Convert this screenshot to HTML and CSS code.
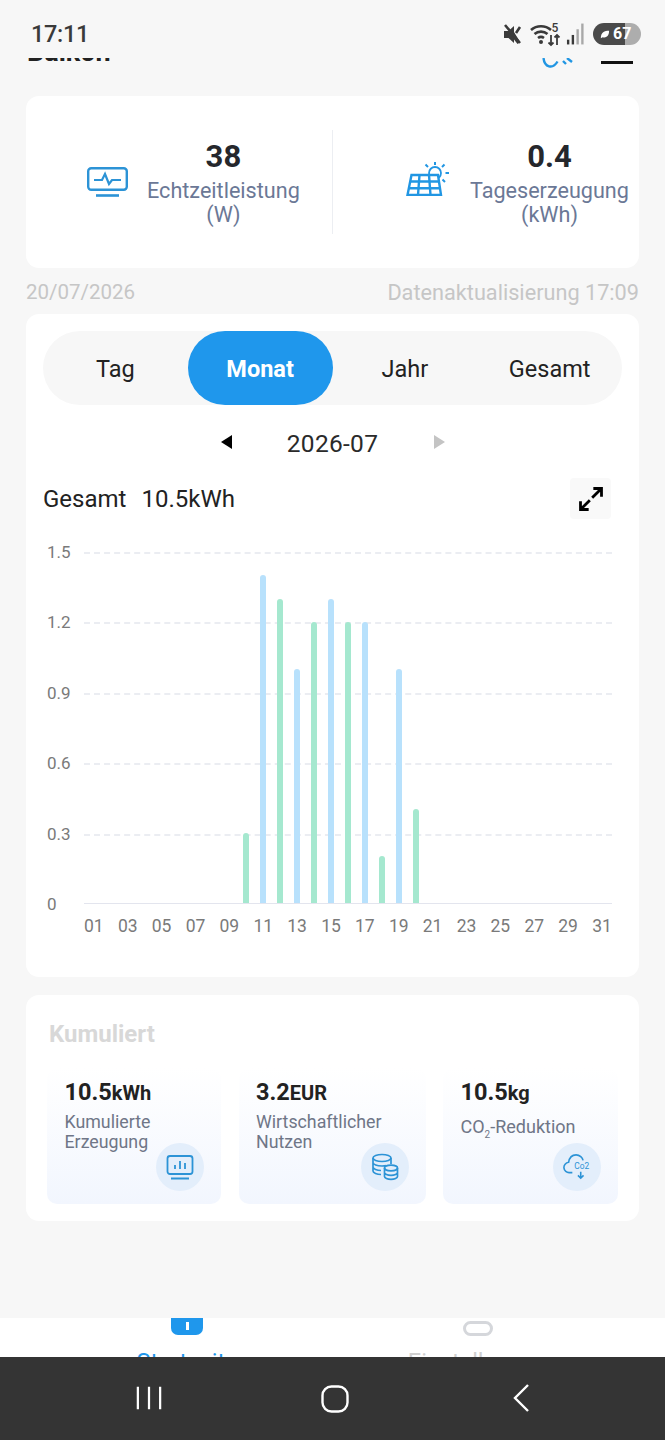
FILE: index.html
```html
<!DOCTYPE html>
<html lang="de">
<head>
<meta charset="utf-8">
<title>Balkon</title>
<link rel="stylesheet" href="styles.css">
</head>
<body>
<div class="screen">
  <div class="status">
    <span class="clock">17:11</span>
    <div class="status-icons">
      <svg class="ic-mute" viewBox="0 0 24 24"><path d="M3 9h4.500l5.500-5v6l6 10-2.500 2-3.500-4.500V21l-5.500-5H3z" fill="#3a3a3a"/><path d="M4 3l15 18M19 5l-4 6" stroke="#3a3a3a" stroke-width="2.600" fill="none"/></svg>
      <svg class="ic-wifi" viewBox="0 0 32 26"><g fill="none" stroke="#3a3a3a" stroke-width="2.600"><path d="M1 9a15 15 0 0 1 20 0"/><path d="M4.500 13a10 10 0 0 1 13 0"/><path d="M8 17a5 5 0 0 1 6 0"/></g><circle cx="11" cy="21" r="2" fill="#3a3a3a"/><path d="M21 14v10m-2.500-2.500L21 24l2.500-2.500M27 24V14m-2.500 2.500L27 14l2.500 2.500" fill="none" stroke="#3a3a3a" stroke-width="1.800"/><text x="21.500" y="10.500" class="ic-wifi-num">5</text></svg>
      <svg class="ic-signal" viewBox="0 0 20 24"><rect x="1" y="18" width="2.500" height="5" fill="#3a3a3a"/><rect x="6" y="13" width="2.500" height="10" fill="#3a3a3a"/><rect x="11" y="7" width="2.500" height="16" fill="#a8a8a8"/><rect x="16" y="1" width="2.500" height="22" fill="#a8a8a8"/></svg>
      <div class="battery">
        <svg class="ic-leaf" viewBox="0 0 12 12"><path d="M2 10C2 4 6 2 11 2c0 5-2 8-7 7z" fill="#fff"/></svg>
        <span class="battery-num">67</span>
      </div>
    </div>
  </div>

  <div class="page-head">
    <span class="page-title">Balkon</span>
    <div class="page-head-icons">
      <svg class="ic-head-arc" viewBox="0 0 32 12"><path d="M1.500 0c1 9 9 12 14 3.500M21 3l3 3M25 0l5 4" fill="none" stroke="#2196e3" stroke-width="2.400"/></svg>
      <span class="menu-line"></span>
    </div>
  </div>

  <section class="card live">
    <div class="live-item live-left">
      <svg class="live-icon-monitor" viewBox="0 0 41 30"><rect x="1.200" y="1.200" width="38.600" height="21.600" rx="3" fill="none" stroke="#2c93d6" stroke-width="2.400"/><path d="M7 13h8l3-6 4 10 3-4h9" fill="none" stroke="#2c93d6" stroke-width="2.200"/><path d="M9 28.500h23" stroke="#2c93d6" stroke-width="2.600"/></svg>
      <div class="live-text">
        <div class="live-value">38</div>
        <div class="live-label">Echtzeitleistung<br>(W)</div>
      </div>
    </div>
    <div class="live-divider"></div>
    <div class="live-item live-right">
      <svg class="live-icon-solar" viewBox="0 0 44 34"><g fill="none" stroke="#2196e3"><circle cx="29" cy="11" r="6" stroke-width="1.800"/><path d="M29 0v3M19.500 2.500l2.500 2.500M38.500 2.500 36 5M43 11h-3.500M39 20l-2.500-2.500" stroke-width="2"/><path d="M5.500 13H32l3 20H1.500z" fill="#fff" stroke-width="2.400"/><path d="M4 19.500h29.500M2.800 26.200h31.500M13.500 13l-1.500 20M23 13l1.500 20" stroke-width="2.400"/></g></svg>
      <div class="live-text">
        <div class="live-value">0.4</div>
        <div class="live-label">Tageserzeugung<br>(kWh)</div>
      </div>
    </div>
  </section>

  <div class="date-row">
    <span>20/07/2026</span>
    <span class="update">Datenaktualisierung 17:09</span>
  </div>

  <section class="card chart-card">
    <div class="tabs">
      <span class="tab">Tag</span>
      <span class="tab tab-active">Monat</span>
      <span class="tab">Jahr</span>
      <span class="tab">Gesamt</span>
    </div>
    <div class="month-row">
      <span class="arrow arrow-left"></span>
      <span class="month">2026-07</span>
      <span class="arrow arrow-right"></span>
    </div>
    <div class="total-row">
      <div class="total"><span>Gesamt</span><span>10.5kWh</span></div>
      <span class="expand">
        <svg viewBox="0 0 24 24"><path d="M14 3h7v7M21 3l-8 8M10 21H3v-7M3 21l8-8" fill="none" stroke="#000" stroke-width="2.400"/></svg>
      </span>
    </div>
    <div class="chart">
      <div class="y-axis">
        <span>1.5</span><span>1.2</span><span>0.9</span><span>0.6</span><span>0.3</span><span>0</span>
      </div>
      <div class="plot-wrap">
        <div class="plot">
          <div class="grid"><i></i><i></i><i></i><i></i><i></i></div>
          <div class="bars">
            <b></b><b></b><b></b><b></b><b></b><b></b><b></b><b></b><b></b>
            <b class="green" style="height:20%"></b>
            <b class="blue" style="height:93.330%"></b>
            <b class="green" style="height:86.670%"></b>
            <b class="blue" style="height:66.670%"></b>
            <b class="green" style="height:80%"></b>
            <b class="blue" style="height:86.670%"></b>
            <b class="green" style="height:80%"></b>
            <b class="blue" style="height:80%"></b>
            <b class="green" style="height:13.330%"></b>
            <b class="blue" style="height:66.670%"></b>
            <b class="green" style="height:26.670%"></b>
            <b></b><b></b><b></b><b></b><b></b><b></b><b></b><b></b><b></b><b></b><b></b>
          </div>
        </div>
        <div class="x-axis">
          <span>01</span><span>03</span><span>05</span><span>07</span><span>09</span><span>11</span><span>13</span><span>15</span><span>17</span><span>19</span><span>21</span><span>23</span><span>25</span><span>27</span><span>29</span><span>31</span>
        </div>
      </div>
    </div>
  </section>

  <section class="card sum-card">
    <h2 class="sum-title">Kumuliert</h2>
    <div class="sum-grid">
      <div class="sum-item sum-a">
        <div class="sum-value">10.5<small>kWh</small></div>
        <div class="sum-label">Kumulierte<br>Erzeugung</div>
        <span class="sum-icon">
          <svg viewBox="0 0 28 28"><rect x="1.500" y="3" width="25" height="18" rx="2.500" fill="none" stroke="#2c93d6" stroke-width="1.800"/><path d="M9 16v-4M14 16V8M19 16v-6M5 25.500h18" stroke="#2c93d6" stroke-width="1.800" fill="none"/></svg>
        </span>
      </div>
      <div class="sum-item sum-b">
        <div class="sum-value">3.2<small>EUR</small></div>
        <div class="sum-label">Wirtschaftlicher<br>Nutzen</div>
        <span class="sum-icon">
          <svg viewBox="0 0 28 28"><g fill="none" stroke="#2c93d6" stroke-width="1.700"><ellipse cx="11" cy="5" rx="9" ry="3.500"/><path d="M2 5v13c0 2 4 3.500 8 3.500M20 5v6M2 9.500c0 2 4 3.500 9 3.500 2 0 3 0 4-.5M2 14c0 2 4 3.500 8 3.500"/><ellipse cx="20" cy="15" rx="6.500" ry="2.800"/><path d="M13.500 15v8.500c0 1.500 3 2.800 6.500 2.800s6.500-1.300 6.500-2.800V15M13.500 19.500c0 1.500 3 2.800 6.500 2.800s6.500-1.300 6.500-2.800"/></g></svg>
        </span>
      </div>
      <div class="sum-item sum-c">
        <div class="sum-value">10.5<small>kg</small></div>
        <div class="sum-label sum-label-one">CO<sub>2</sub>-Reduktion</div>
        <span class="sum-icon">
          <svg viewBox="0 0 30 30"><path d="M10 21H7a5.500 5.500 0 0 1-1-11C7 4 11 2 14 2c4 0 7 3 7.500 6" fill="none" stroke="#2c93d6" stroke-width="1.700"/><text x="12" y="17" class="co2-text">Co2</text><path d="M19 20v7m-3-3 3 3 3-3" fill="none" stroke="#2c93d6" stroke-width="1.700"/></svg>
        </span>
      </div>
    </div>
  </section>

  <div class="spacer"></div>

  <div class="tabbar">
    <div class="tabbar-item tabbar-home">
      <span class="home-icon"><i></i></span>
      <span class="tabbar-label tabbar-label-on">Startseite</span>
    </div>
    <div class="tabbar-item tabbar-settings">
      <span class="settings-icon"></span>
      <span class="tabbar-label">Einstellungen</span>
    </div>
  </div>

  <div class="navbar">
    <svg class="nav-recent" viewBox="0 0 28 26"><path d="M2 1v24M14 1v24M26 1v24" stroke="#fff" stroke-width="2.400"/></svg>
    <svg class="nav-home" viewBox="0 0 28 28"><rect x="1.500" y="1.500" width="25" height="25" rx="9" fill="none" stroke="#fff" stroke-width="2.400"/></svg>
    <svg class="nav-back" viewBox="0 0 18 30"><path d="M16 2 3 15l13 13" fill="none" stroke="#fff" stroke-width="2.400"/></svg>
  </div>
</div>
</body>
</html>
```
FILE: styles.css
```css
* { box-sizing: border-box; }
html, body { margin: 0; padding: 0; }
body { background: #f7f7f7; font-family: Roboto, "Liberation Sans", sans-serif; color: #222; }
.screen { width: 665px; height: 1440px; display: flex; flex-direction: column; overflow: hidden; background: #f7f7f7; }

.status { height: 58px; flex: none; display: flex; justify-content: space-between; align-items: flex-start; padding: 20px 24px 0 31px; background: #f7f7f7; position: relative; z-index: 1; }
.clock { font-size: 23.500px; font-weight: 500; line-height: 28px; color: #3a3a3a; letter-spacing: -.3px; }
.status-icons { display: flex; align-items: center; height: 28px; }
.ic-mute { width: 24px; height: 24px; margin-right: 5px; }
.ic-wifi { width: 32px; height: 26px; margin-right: 4px; }
.ic-wifi-num { font-size: 12px; font-weight: 500; fill: #3a3a3a; font-family: Roboto, sans-serif; }
.ic-signal { width: 19px; height: 24px; margin-right: 8px; }
.battery { width: 48px; height: 22px; border-radius: 11px; background: linear-gradient(90deg, #4a4a4a 0 67%, #adadad 67%); display: flex; align-items: center; padding-left: 6px; gap: 3px; }
.ic-leaf { width: 11px; height: 11px; }
.battery-num { color: #fff; font-size: 16px; font-weight: 700; line-height: 22px; }

.page-head { height: 38px; flex: none; display: flex; justify-content: space-between; padding: 0 32px 0 27px; overflow: hidden; }
.page-title { font-size: 27px; font-weight: 700; line-height: 32px; margin-top: -22px; color: #222; }
.page-head-icons { display: flex; gap: 27px; align-items: flex-start; }
.ic-head-arc { width: 32px; height: 12px; display: block; }
.menu-line { width: 32px; height: 3px; background: #111; margin-top: 3px; }

.card { background: #fff; border-radius: 13px; margin: 0 26px; flex: none; }

.live { height: 172px; display: flex; align-items: flex-start; padding-top: 34px; }
.live-item { width: 306px; flex: none; display: flex; align-items: center; height: 104px; }
.live-left { padding-left: 61px; gap: 19px; }
.live-right { padding-left: 73px; gap: 20px; }
.live-divider { width: 1px; height: 104px; background: #eceef2; flex: none; }
.live-icon-monitor { width: 41px; height: 30px; flex: none; }
.live-icon-solar { width: 44px; height: 34px; margin-top: -6px; flex: none; }
.live-text { text-align: center; margin-top: 5px; }
.live-value { font-size: 31px; font-weight: 700; line-height: 36px; color: #25272c; margin-top: -4px; }
.live-label { font-size: 21.600px; line-height: 24px; color: #6b7896; margin-top: 4px; white-space: nowrap; }

.date-row { flex: none; height: 46px; display: flex; justify-content: space-between; align-items: center; padding: 2px 26px 0; font-size: 20.500px; color: #c6c6c6; }
.update { font-size: 21.700px; }

.chart-card { height: 663px; padding: 17px 17px 0; }
.tabs { display: flex; height: 74px; border-radius: 37px; background: #f7f7f7; }
.tab { flex: 1; display: flex; align-items: center; justify-content: center; font-size: 23.500px; padding-top: 2px; color: #222; border-radius: 37px; }
.tab-active { background: #1f97ec; color: #fff; font-weight: 700; }

.month-row { display: flex; align-items: center; justify-content: center; height: 28px; margin-top: 24px; }
.month { font-size: 24.500px; color: #2a2a2a; width: 202px; text-align: center; letter-spacing: .3px; }
.arrow { width: 0; height: 0; border-top: 7px solid transparent; border-bottom: 7px solid transparent; margin-bottom: 2px; }
.arrow-left { border-right: 11px solid #000; }
.arrow-right { border-left: 11px solid #c4c4c4; }

.total-row { display: flex; justify-content: space-between; align-items: center; height: 41px; margin-top: 21px; padding-right: 11px; }
.total { display: flex; gap: 15px; font-size: 24px; color: #222; padding-top: 1px; }
.expand { width: 41px; height: 41px; background: #f9f9f9; border-radius: 4px; display: flex; align-items: center; justify-content: center; }
.expand svg { width: 28px; height: 28px; }

.chart { display: flex; margin-top: 33px; }
.y-axis { width: 41px; display: flex; flex-direction: column; justify-content: space-between; margin-top: -10px; height: 372px; font-size: 17px; line-height: 20px; color: #7a7a7a; padding-left: 4px; }
.plot-wrap { width: 528px; }
.plot { height: 352px; position: relative; border-bottom: 1px solid #e3e5ee; }
.grid { position: absolute; inset: 0 0 -1px; display: flex; flex-direction: column; }
.grid i { height: 70.400px; border-top: 2px dashed #ebedf2; display: block; }
.bars { position: absolute; inset: 0; display: grid; grid-template-columns: repeat(31, 1fr); align-items: end; justify-items: center; }
.bars b { width: 6px; display: block; border-radius: 3px 3px 0 0; }
.green { background: #a5e8cf; }
.blue { background: #b8e1fc; }
.x-axis { display: flex; justify-content: space-between; margin-top: 12px; font-size: 17.500px; line-height: 20px; color: #7a7a7a; }

.sum-card { height: 226px; margin-top: 18px; padding: 25px 21px 0 23px; }
.sum-title { margin: 0; font-size: 24px; line-height: 28px; font-weight: 700; color: #d8d8d8; }
.sum-grid { display: flex; margin: 20px 0 0 -2px; gap: 17.500px; }
.sum-item { height: 136px; border-radius: 10px; background: linear-gradient(180deg, #fff 0%, #f2f6fe 100%); position: relative; flex: none; padding: 9px 0 0 17.500px; }
.sum-a { width: 174px; }
.sum-b { width: 187px; }
.sum-c { width: 175px; }
.sum-value { font-size: 23.500px; font-weight: 700; line-height: 30px; color: #222; }
.sum-value small { font-size: 20px; font-weight: 700; }
.sum-label { font-size: 17.800px; line-height: 20px; color: #6f7687; margin-top: 4px; }
.sum-label-one { margin-top: 9px; font-size: 18px; }
.sum-label sub { font-size: 10px; line-height: 0; }
.sum-icon { position: absolute; right: 17px; bottom: 13px; width: 48px; height: 48px; border-radius: 50%; background: #e3eefb; display: flex; align-items: center; justify-content: center; }
.sum-icon svg { width: 28px; height: 28px; }
.co2-text { font-size: 9px; fill: #2c93d6; font-family: Roboto, sans-serif; }

.spacer { flex: 1; }

.tabbar { height: 39px; flex: none; background: #fff; display: flex; overflow: hidden; }
.tabbar-item { display: flex; flex-direction: column; align-items: center; }
.tabbar-home { width: 374px; }
.tabbar-settings { width: 208px; }
.home-icon { width: 32px; height: 17px; background: #1f97ec; border-radius: 0 0 7px 7px; display: flex; justify-content: center; flex: none; }
.home-icon i { width: 3px; height: 8px; background: #fff; margin-top: 4px; display: block; }
.settings-icon { width: 30px; height: 15px; border: 3px solid #d5d7db; border-radius: 8px; margin-top: 3px; flex: none; }
.tabbar-label { font-size: 23.500px; line-height: 26px; color: #d0d0d0; margin-top: 14px; white-space: nowrap; flex: none; }
.tabbar-settings .tabbar-label { margin-top: 13px; }
.tabbar-label-on { color: #1f97ec; }

.navbar { height: 83px; flex: none; background: #343434; position: relative; }
.nav-recent { position: absolute; left: 136px; top: 28px; width: 26px; height: 26px; }
.nav-home { position: absolute; left: 321px; top: 28px; width: 28px; height: 28px; }
.nav-back { position: absolute; left: 512px; top: 26px; width: 18px; height: 30px; }
```
